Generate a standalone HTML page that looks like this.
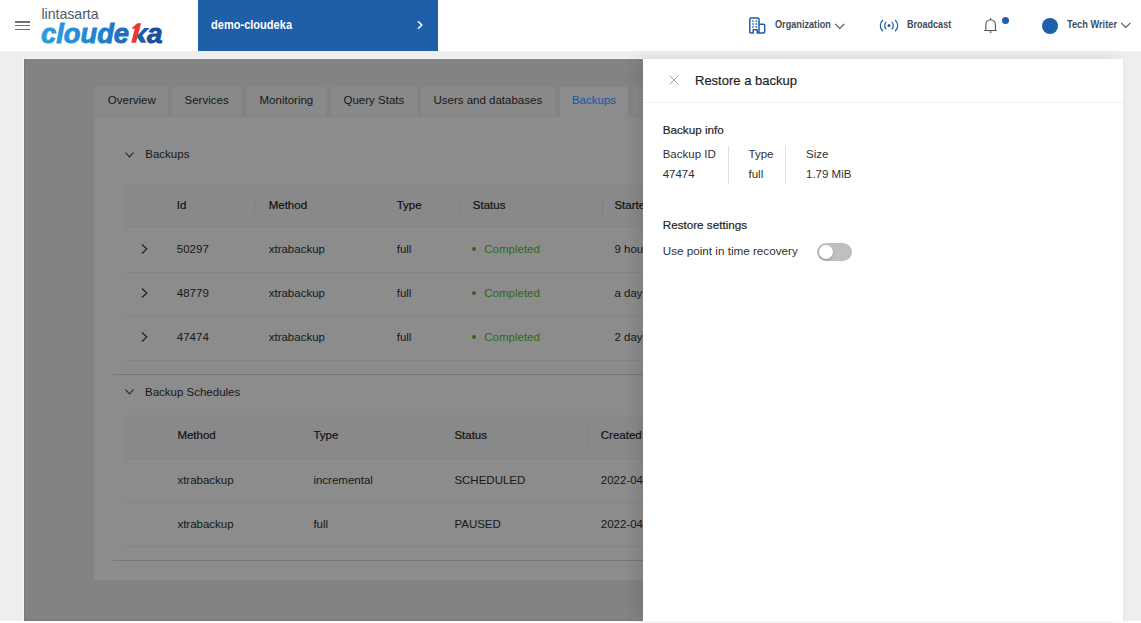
<!DOCTYPE html>
<html><head><meta charset="utf-8">
<style>
*{box-sizing:border-box;margin:0;padding:0}
html,body{width:1141px;height:623px;overflow:hidden;background:#ffffff;font-family:"Liberation Sans",sans-serif}
.abs{position:absolute}
.t{position:absolute;white-space:nowrap;line-height:1}
.nav{position:absolute;white-space:nowrap;line-height:1;font-weight:bold;color:#3c4858;transform-origin:0 0}
</style></head>
<body>
<div class="abs" style="left:0px;top:51px;width:1141px;height:570px;background:#eeeeee;"></div>
<div class="abs" style="left:0px;top:0px;width:1141px;height:51px;background:#fff;"></div>
<div class="abs" style="left:15px;top:21.2px;width:15px;height:1.4px;background:#727272;"></div>
<div class="abs" style="left:15px;top:25.1px;width:15px;height:1.4px;background:#727272;"></div>
<div class="abs" style="left:15px;top:29.0px;width:15px;height:1.4px;background:#727272;"></div>
<div class="t" style="left:41.5px;top:6.93px;font-size:14.2px;color:#4d5b6b;font-weight:normal;letter-spacing:-0.05px">lintasarta</div>
<svg class="abs" style="left:0px;top:0px" width="200" height="51" viewBox="0 0 200 51">
<defs><linearGradient id="lg" gradientUnits="userSpaceOnUse" x1="42" x2="162" y1="0" y2="0"><stop offset="0" stop-color="#2a9fe0"/><stop offset="0.5" stop-color="#1f7fcf"/><stop offset="1" stop-color="#1b4f9e"/></linearGradient></defs>
<text x="41" y="42.6" font-family="Liberation Sans" font-weight="bold" font-style="italic" font-size="27.5" fill="url(#lg)" stroke="url(#lg)" stroke-width="0.9" textLength="88" lengthAdjust="spacingAndGlyphs">cloude</text>
<polygon points="144.3,28.1 149.6,28.1 142.4,35.3 146.4,42.7 140.9,42.7 136.5,36.5" fill="#1f5fae"/>
<polygon points="137.3,23.2 141.1,23.2 136.0,42.7 131.2,42.7 134.8,28.8 132.1,28.8 132.1,27.7" fill="#e53a2f"/>
<text x="147" y="42.6" font-family="Liberation Sans" font-weight="bold" font-style="italic" font-size="27.5" fill="#1b4f9e" stroke="#1b4f9e" stroke-width="0.9" textLength="15.5" lengthAdjust="spacingAndGlyphs">a</text>
</svg>
<div class="abs" style="left:198px;top:0px;width:240px;height:51px;background:#1f5ea8;"></div>
<div class="t" style="left:211.0px;top:17.87px;font-size:13px;color:#fff;font-weight:bold;transform:scaleX(0.85);transform-origin:0 0">demo-cloudeka</div>
<svg class="abs" style="left:416px;top:20px" width="8" height="10" viewBox="0 0 8 10"><path d="M2 1.2 L5.8 5 L2 8.8" fill="none" stroke="#fff" stroke-width="1.5"/></svg>
<svg class="abs" style="left:748px;top:16px" width="18" height="18" viewBox="0 0 18 18">
<path d="M1.8 16.9 V3.2 a1.2 1.2 0 0 1 1.2-1.2 H9.8 a1.2 1.2 0 0 1 1.2 1.2 V16.9 M11 8.2 H15.5 a1.2 1.2 0 0 1 1.2 1.2 V15.7 a1.2 1.2 0 0 1 -1.2 1.2 H9.2 V13.8 H5.2 V16.9 H3 a1.2 1.2 0 0 1 -1.2 -1.2" fill="none" stroke="#1f5ea8" stroke-width="1.5" stroke-linejoin="round"/>
<g fill="#1f5ea8"><rect x="4.2" y="4.4" width="1.6" height="1.4"/><rect x="7.5" y="4.4" width="1.6" height="1.4"/><rect x="4.2" y="7.3" width="1.6" height="1.4"/><rect x="7.5" y="7.3" width="1.6" height="1.4"/><rect x="4.2" y="10.2" width="1.6" height="1.4"/><rect x="7.5" y="10.2" width="1.6" height="1.4"/></g>
</svg>
<div class="t" style="left:774.5px;top:18.77px;font-size:10.5px;color:#434c5a;font-weight:bold;transform:scaleX(0.87);transform-origin:0 0">Organization</div>
<svg class="abs" style="left:834px;top:22px" width="12" height="8" viewBox="0 0 12 8"><path d="M1.2 1.8 L5.8 6.5 L10.4 1.8" fill="none" stroke="#555" stroke-width="1.1"/></svg>
<svg class="abs" style="left:879px;top:18px" width="20" height="15" viewBox="0 0 20 15">
<circle cx="10" cy="7.6" r="1.5" fill="#1f5ea8"/>
<path d="M3.9 1.9 A7.5 7.5 0 0 0 3.9 13.3 M16.1 1.9 A7.5 7.5 0 0 1 16.1 13.3 M7.3 3.9 A5 5 0 0 0 7.3 11.3 M12.7 3.9 A5 5 0 0 1 12.7 11.3" fill="none" stroke="#1f5ea8" stroke-width="1.25"/>
</svg>
<div class="t" style="left:907.0px;top:19.17px;font-size:10.5px;color:#434c5a;font-weight:bold;transform:scaleX(0.86);transform-origin:0 0">Broadcast</div>
<svg class="abs" style="left:983px;top:17px" width="16" height="18" viewBox="0 0 16 18">
<path d="M1.2 13.5 H13.8 M2.8 13.5 V7.6 a4.8 4.8 0 0 1 9.6 0 V13.5 M7.6 1.1 V2.8" fill="none" stroke="#555" stroke-width="1.1"/>
<path d="M6 14.6 H9.2 L7.6 16.6 Z" fill="#777"/>
</svg>
<div class="abs" style="left:1002px;top:17px;width:7px;height:7px;background:#1f5ea8;border-radius:50%"></div>
<div class="abs" style="left:1042px;top:18px;width:16px;height:16px;background:#1f5ea8;border-radius:50%"></div>
<div class="t" style="left:1066.5px;top:18.57px;font-size:10.5px;color:#434c5a;font-weight:bold;transform:scaleX(0.88);transform-origin:0 0">Tech Writer</div>
<svg class="abs" style="left:1120px;top:21px" width="12" height="8" viewBox="0 0 12 8"><path d="M1.2 1.8 L5.8 6.5 L10.4 1.8" fill="none" stroke="#555" stroke-width="1.1"/></svg>
<div class="abs" style="left:94px;top:116px;width:1000px;height:1px;background:#f0f0f0;"></div>
<div class="abs" style="left:94px;top:86px;width:75px;height:31px;background:#fafafa;border:1px solid #f0f0f0"></div>
<div class="t" style="left:31.8px;width:200px;text-align:center;top:95.25px;font-size:11.5px;color:#303030;font-weight:normal">Overview</div>
<div class="abs" style="left:171px;top:86px;width:71px;height:31px;background:#fafafa;border:1px solid #f0f0f0"></div>
<div class="t" style="left:106.6px;width:200px;text-align:center;top:95.25px;font-size:11.5px;color:#303030;font-weight:normal">Services</div>
<div class="abs" style="left:246px;top:86px;width:81px;height:31px;background:#fafafa;border:1px solid #f0f0f0"></div>
<div class="t" style="left:186.4px;width:200px;text-align:center;top:95.25px;font-size:11.5px;color:#303030;font-weight:normal">Monitoring</div>
<div class="abs" style="left:330px;top:86px;width:88px;height:31px;background:#fafafa;border:1px solid #f0f0f0"></div>
<div class="t" style="left:273.9px;width:200px;text-align:center;top:95.25px;font-size:11.5px;color:#303030;font-weight:normal">Query Stats</div>
<div class="abs" style="left:420px;top:86px;width:136px;height:31px;background:#fafafa;border:1px solid #f0f0f0"></div>
<div class="t" style="left:387.8px;width:200px;text-align:center;top:95.25px;font-size:11.5px;color:#303030;font-weight:normal">Users and databases</div>
<div class="abs" style="left:559px;top:86px;width:70px;height:31px;background:#fff;border:1px solid #f0f0f0;border-bottom-color:#fff"></div>
<div class="abs" style="left:632px;top:86px;width:68px;height:31px;background:#fafafa;border:1px solid #f0f0f0"></div>
<div class="abs" style="left:94px;top:117px;width:1000px;height:463px;background:#fff;"></div>
<svg class="abs" style="left:124px;top:150.5px" width="11" height="8" viewBox="0 0 11 8"><path d="M1.5 1.5 L5.5 6 L9.5 1.5" fill="none" stroke="#333" stroke-width="1.1"/></svg>
<div class="t" style="left:145.3px;top:149.45px;font-size:11.5px;color:#303030;font-weight:normal;">Backups</div>
<div class="abs" style="left:125px;top:184px;width:900px;height:44px;background:#fafafa;border-bottom:1px solid #f0f0f0"></div>
<div class="t" style="left:176.8px;top:199.85px;font-size:11.5px;color:#1f1f1f;font-weight:normal;-webkit-text-stroke:0.2px currentColor">Id</div>
<div class="t" style="left:268.7px;top:199.85px;font-size:11.5px;color:#1f1f1f;font-weight:normal;-webkit-text-stroke:0.2px currentColor">Method</div>
<div class="t" style="left:396.7px;top:199.85px;font-size:11.5px;color:#1f1f1f;font-weight:normal;-webkit-text-stroke:0.2px currentColor">Type</div>
<div class="t" style="left:472.8px;top:199.85px;font-size:11.5px;color:#1f1f1f;font-weight:normal;-webkit-text-stroke:0.2px currentColor">Status</div>
<div class="t" style="left:614.4px;top:199.85px;font-size:11.5px;color:#1f1f1f;font-weight:normal;-webkit-text-stroke:0.2px currentColor">Started</div>
<div class="abs" style="left:254px;top:197px;width:1px;height:18px;background:#e8e8e8;"></div>
<div class="abs" style="left:459px;top:197px;width:1px;height:18px;background:#e8e8e8;"></div>
<div class="abs" style="left:602px;top:197px;width:1px;height:18px;background:#e8e8e8;"></div>
<svg class="abs" style="left:140px;top:243px" width="8" height="12" viewBox="0 0 8 12"><path d="M2 1.5 L6.8 6 L2 10.5" fill="none" stroke="#333" stroke-width="1.1"/></svg>
<div class="t" style="left:176.8px;top:244.45px;font-size:11.5px;color:#303030;font-weight:normal;">50297</div>
<div class="t" style="left:268.7px;top:244.45px;font-size:11.5px;color:#303030;font-weight:normal;">xtrabackup</div>
<div class="t" style="left:396.7px;top:244.45px;font-size:11.5px;color:#303030;font-weight:normal;">full</div>
<div class="abs" style="left:472px;top:247px;width:4px;height:4px;background:#52c41a;border-radius:50%"></div>
<div class="t" style="left:484.3px;top:244.45px;font-size:11.5px;color:#52c41a;font-weight:normal;">Completed</div>
<div class="t" style="left:614.4px;top:244.45px;font-size:11.5px;color:#303030;font-weight:normal;">9 hours ago</div>
<div class="abs" style="left:125px;top:272px;width:900px;height:1px;background:#f0f0f0;"></div>
<svg class="abs" style="left:140px;top:287px" width="8" height="12" viewBox="0 0 8 12"><path d="M2 1.5 L6.8 6 L2 10.5" fill="none" stroke="#333" stroke-width="1.1"/></svg>
<div class="t" style="left:176.8px;top:288.45px;font-size:11.5px;color:#303030;font-weight:normal;">48779</div>
<div class="t" style="left:268.7px;top:288.45px;font-size:11.5px;color:#303030;font-weight:normal;">xtrabackup</div>
<div class="t" style="left:396.7px;top:288.45px;font-size:11.5px;color:#303030;font-weight:normal;">full</div>
<div class="abs" style="left:472px;top:291px;width:4px;height:4px;background:#52c41a;border-radius:50%"></div>
<div class="t" style="left:484.3px;top:288.45px;font-size:11.5px;color:#52c41a;font-weight:normal;">Completed</div>
<div class="t" style="left:614.4px;top:288.45px;font-size:11.5px;color:#303030;font-weight:normal;">a day ago</div>
<div class="abs" style="left:125px;top:316px;width:900px;height:1px;background:#f0f0f0;"></div>
<svg class="abs" style="left:140px;top:331px" width="8" height="12" viewBox="0 0 8 12"><path d="M2 1.5 L6.8 6 L2 10.5" fill="none" stroke="#333" stroke-width="1.1"/></svg>
<div class="t" style="left:176.8px;top:332.45px;font-size:11.5px;color:#303030;font-weight:normal;">47474</div>
<div class="t" style="left:268.7px;top:332.45px;font-size:11.5px;color:#303030;font-weight:normal;">xtrabackup</div>
<div class="t" style="left:396.7px;top:332.45px;font-size:11.5px;color:#303030;font-weight:normal;">full</div>
<div class="abs" style="left:472px;top:335px;width:4px;height:4px;background:#52c41a;border-radius:50%"></div>
<div class="t" style="left:484.3px;top:332.45px;font-size:11.5px;color:#52c41a;font-weight:normal;">Completed</div>
<div class="t" style="left:614.4px;top:332.45px;font-size:11.5px;color:#303030;font-weight:normal;">2 days ago</div>
<div class="abs" style="left:125px;top:360px;width:900px;height:1px;background:#f0f0f0;"></div>
<div class="abs" style="left:113px;top:374px;width:980px;height:1px;background:#d9d9d9;"></div>
<svg class="abs" style="left:124px;top:388px" width="11" height="8" viewBox="0 0 11 8"><path d="M1.5 1.5 L5.5 6 L9.5 1.5" fill="none" stroke="#333" stroke-width="1.1"/></svg>
<div class="t" style="left:145.0px;top:386.65px;font-size:11.5px;color:#303030;font-weight:normal;">Backup Schedules</div>
<div class="abs" style="left:125px;top:415px;width:900px;height:43.5px;background:#fafafa;border-bottom:1px solid #f0f0f0"></div>
<div class="t" style="left:177.4px;top:429.95px;font-size:11.5px;color:#1f1f1f;font-weight:normal;-webkit-text-stroke:0.2px currentColor">Method</div>
<div class="t" style="left:313.4px;top:429.95px;font-size:11.5px;color:#1f1f1f;font-weight:normal;-webkit-text-stroke:0.2px currentColor">Type</div>
<div class="t" style="left:454.4px;top:429.95px;font-size:11.5px;color:#1f1f1f;font-weight:normal;-webkit-text-stroke:0.2px currentColor">Status</div>
<div class="t" style="left:600.8px;top:429.95px;font-size:11.5px;color:#1f1f1f;font-weight:normal;-webkit-text-stroke:0.2px currentColor">Created</div>
<div class="abs" style="left:587px;top:428px;width:1px;height:17px;background:#e8e8e8;"></div>
<div class="t" style="left:177.4px;top:475.45px;font-size:11.5px;color:#303030;font-weight:normal;">xtrabackup</div>
<div class="t" style="left:313.4px;top:475.45px;font-size:11.5px;color:#303030;font-weight:normal;">incremental</div>
<div class="t" style="left:454.4px;top:475.45px;font-size:11.5px;color:#303030;font-weight:normal;">SCHEDULED</div>
<div class="t" style="left:600.8px;top:475.45px;font-size:11.5px;color:#303030;font-weight:normal;">2022-04-01</div>
<div class="abs" style="left:125px;top:502px;width:900px;height:1px;background:#f0f0f0;"></div>
<div class="t" style="left:177.4px;top:519.45px;font-size:11.5px;color:#303030;font-weight:normal;">xtrabackup</div>
<div class="t" style="left:313.4px;top:519.45px;font-size:11.5px;color:#303030;font-weight:normal;">full</div>
<div class="t" style="left:454.4px;top:519.45px;font-size:11.5px;color:#303030;font-weight:normal;">PAUSED</div>
<div class="t" style="left:600.8px;top:519.45px;font-size:11.5px;color:#303030;font-weight:normal;">2022-04-01</div>
<div class="abs" style="left:125px;top:546px;width:900px;height:1px;background:#f0f0f0;"></div>
<div class="abs" style="left:113px;top:560px;width:980px;height:1px;background:#d9d9d9;"></div>
<div class="abs" style="left:24px;top:59px;width:619px;height:562px;background:rgba(0,0,0,0.45);"></div>
<div class="abs" style="left:24px;top:59px;width:1px;height:562px;background:rgba(0,0,0,0.07);"></div>
<div class="abs" style="left:24px;top:620px;width:619px;height:1px;background:rgba(0,0,0,0.07);"></div>
<div class="abs" style="left:23px;top:58px;width:1px;height:563px;background:rgba(255,255,255,0.5);"></div>
<div class="abs" style="left:23px;top:58px;width:620px;height:1px;background:rgba(255,255,255,0.5);"></div>
<div class="t" style="left:494.0px;width:200px;text-align:center;top:95.25px;font-size:11.5px;color:#1556a6;font-weight:normal">Backups</div>
<div class="abs" style="left:643px;top:59px;width:480px;height:562px;background:#fff;box-shadow:-6px 0 14px rgba(0,0,0,0.10)"></div>
<svg class="abs" style="left:667.6px;top:74.3px" width="12" height="12" viewBox="0 0 12 12"><path d="M1.3 1.3 L10.7 10.7 M10.7 1.3 L1.3 10.7" fill="none" stroke="#a0a0a0" stroke-width="1"/></svg>
<div class="t" style="left:695.0px;top:73.67px;font-size:13px;color:#1f1f1f;font-weight:normal;-webkit-text-stroke:0.2px currentColor">Restore a backup</div>
<div class="abs" style="left:643px;top:102px;width:480px;height:1px;background:#f0f0f0;"></div>
<div class="t" style="left:662.7px;top:124.33px;font-size:11.7px;color:#1f1f1f;font-weight:normal;-webkit-text-stroke:0.2px currentColor">Backup info</div>
<div class="t" style="left:662.7px;top:148.95px;font-size:11.5px;color:#303030;font-weight:normal;">Backup ID</div>
<div class="t" style="left:662.7px;top:168.85px;font-size:11.5px;color:#303030;font-weight:normal;">47474</div>
<div class="abs" style="left:728px;top:146px;width:1px;height:38px;background:#e0e0e0;"></div>
<div class="t" style="left:748.5px;top:148.95px;font-size:11.5px;color:#303030;font-weight:normal;">Type</div>
<div class="t" style="left:748.5px;top:168.85px;font-size:11.5px;color:#303030;font-weight:normal;">full</div>
<div class="abs" style="left:785px;top:146px;width:1px;height:38px;background:#e0e0e0;"></div>
<div class="t" style="left:806.0px;top:148.95px;font-size:11.5px;color:#303030;font-weight:normal;">Size</div>
<div class="t" style="left:806.0px;top:168.85px;font-size:11.5px;color:#303030;font-weight:normal;">1.79 MiB</div>
<div class="t" style="left:662.7px;top:218.73px;font-size:11.7px;color:#1f1f1f;font-weight:normal;-webkit-text-stroke:0.2px currentColor">Restore settings</div>
<div class="t" style="left:662.7px;top:244.83px;font-size:11.7px;color:#303030;font-weight:normal;">Use point in time recovery</div>
<div class="abs" style="left:817px;top:243px;width:35px;height:18px;background:#bfbfbf;border-radius:9px"></div>
<div class="abs" style="left:818.8px;top:244.9px;width:14.2px;height:14.2px;background:#fff;border-radius:50%;box-shadow:0 1px 2px rgba(0,0,0,0.25)"></div>
</body></html>
